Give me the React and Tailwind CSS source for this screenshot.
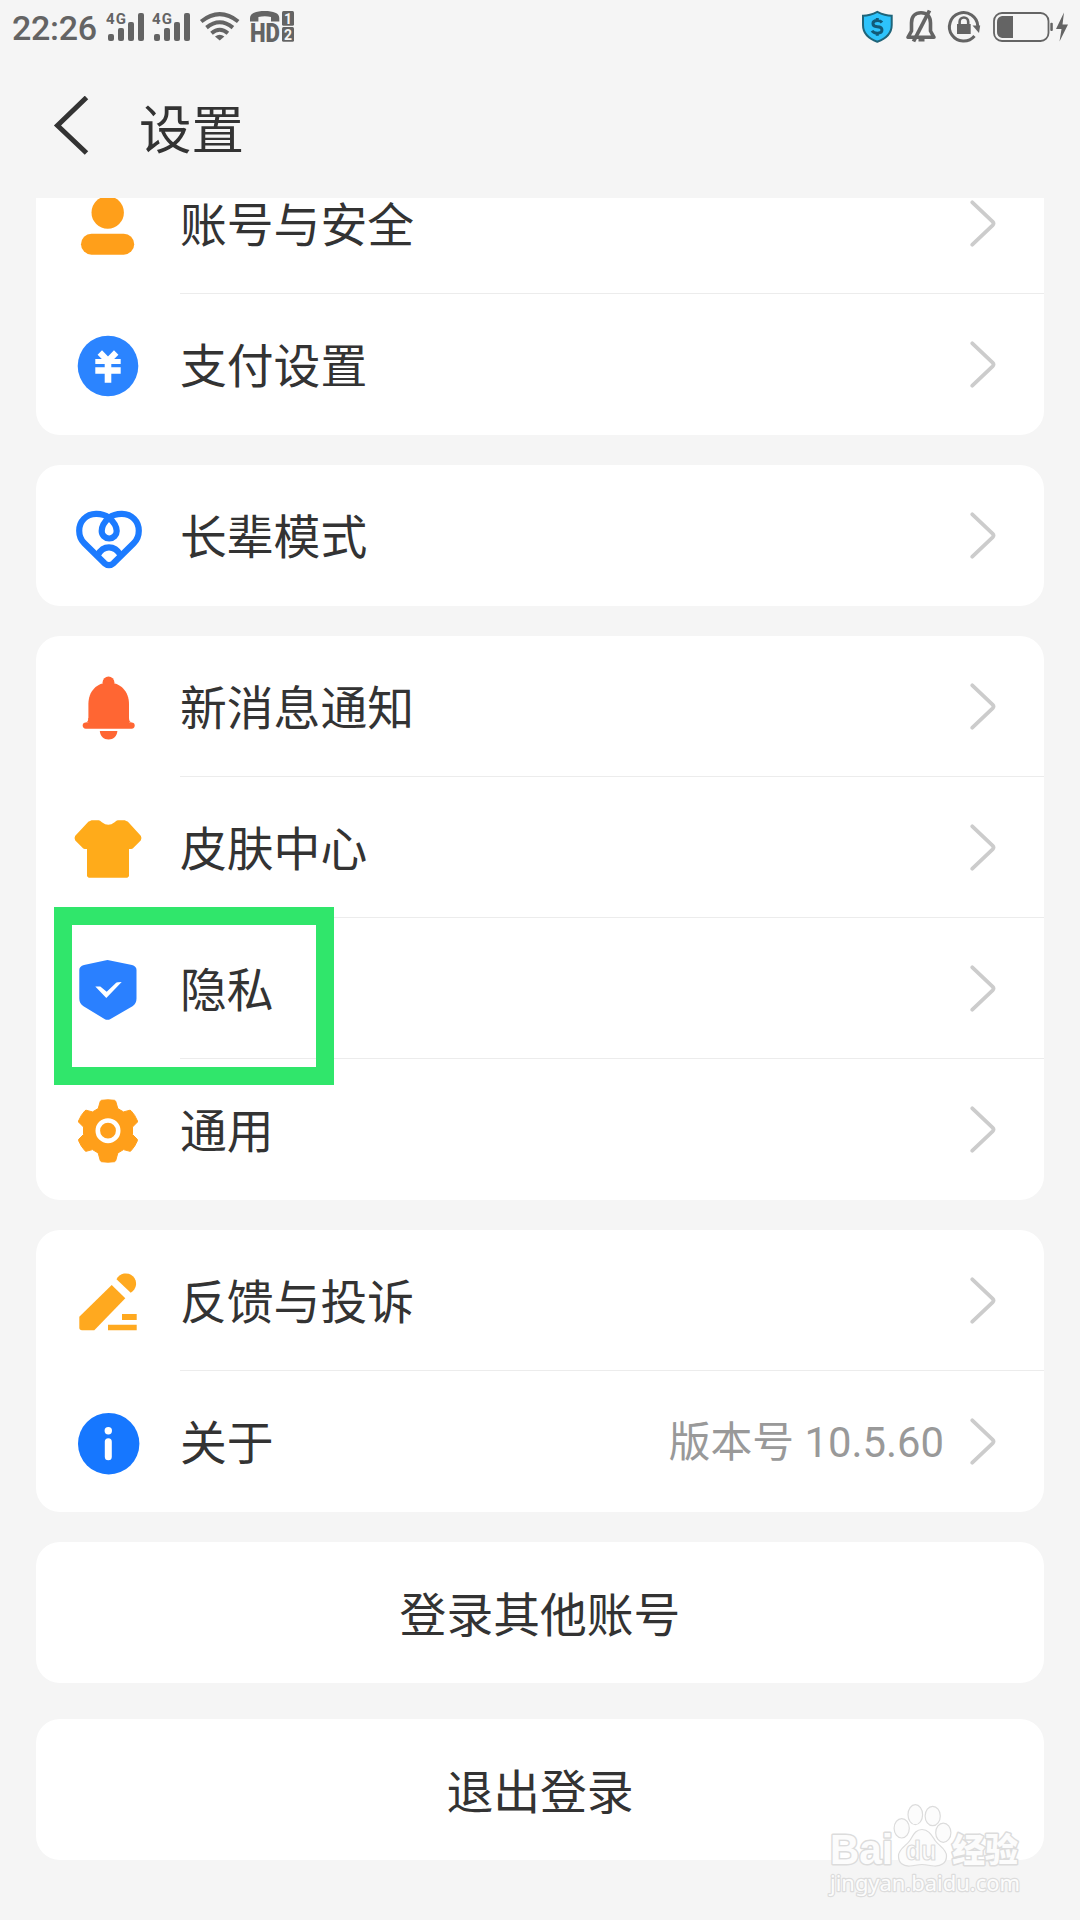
import clsx from 'clsx'

function UserIcon() {
  return (
    <g fill="#ff9f1a">
      <circle cx="35.7" cy="25.5" r="16.2" />
      <rect x="9" y="46.7" width="53.2" height="21" rx="10.5" />
    </g>
  )
}

function YenIcon() {
  return (
    <g>
      <circle cx="36" cy="38" r="30.3" fill="#2b84ff" />
      <path d="M27.8 24.5l8.2 8.4 8.2-8.4" fill="none" stroke="#fff" strokeWidth="6.2" />
      <path d="M23.3 31h25.4v5H23.3zM23.3 39.3h25.4v6.400H23.3zM32.700 31h6.6v23.700h-6.6z" fill="#fff" />
    </g>
  )
}

function HeartIcon() {
  return (
    <g fill="none" stroke="#1c7bff" strokeWidth="6.2" strokeLinecap="round" strokeLinejoin="round">
      <path d="M37 18.8C33 15.8 28.5 14.8 24 14.9C14 15.2 7.200 22.200 7.200 31.700C7.200 37 9 41 12.300 44.300L32.600 64.300Q37 68 41.400 64.300L61.700 44.300C65 41 66.800 37 66.800 31.700C66.800 22.200 60 15.200 50 14.900C45.500 14.800 41 15.800 37 18.8" />
      <path d="M37 18.800C32.500 22.600 29.700 26.700 29.700 32A7.500 7.500 0 0 0 44.700 32C44.700 26.700 41.500 22.600 37 18.800" />
      <path d="M25.800 56C28.500 50.800 32.300 48.300 37 48.300S45.500 50.800 48.600 56" />
    </g>
  )
}

function BellIcon() {
  return (
    <g fill="#ff6633">
      <circle cx="36.500" cy="12.300" r="5.900" />
      <path d="M16.400 53V34C16.400 21 25 12.400 36.600 12.400S57 21 57 34v19z" />
      <path d="M16.400 48q0 4-3 4.500h46.600q-3-.5-3-4.500z" />
      <rect x="10.700" y="52.500" width="52" height="6.200" rx="3.100" />
      <path d="M27.800 61h17.600c-.4 5-4 8.500-8.800 8.500s-8.400-3.500-8.800-8.500z" />
    </g>
  )
}

function ShirtIcon() {
  return (
    <path
      d="M19.500 10.300H26.500C29 10.800 31 14.800 36.300 14.800S43.500 10.800 46 10.300H52.800L55 11.300L68 25.500Q69 27.200 68 28.800L60.300 36.500L59 37H56V64.800L55.200 65.700H16.800L16 64.800V37H13L11.700 36.500L4 28.800Q3 27.200 4 25.500L17.300 11.300Z"
      fill="#ffab1a"
      stroke="#ffab1a"
      strokeWidth="2"
      strokeLinejoin="round"
    />
  )
}

function ShieldIcon() {
  return (
    <g>
      <path
        d="M33 8.500Q35.500 7.700 38 8.500L60 13Q64.500 14.300 64.500 18V46.500Q64.500 51.500 60.500 54.300L38.500 67Q35.500 68.700 32.500 67L11.500 54.300Q7.300 51.500 7.300 46.500V18Q7.300 14.300 12 13Z"
        fill="#2a80ff"
      />
      <path d="M23.300 34.600h5l6.400 5.200 9.200-8.800q1-.8 5.800-.9L34.300 46z" fill="#fff" />
    </g>
  )
}

function GearIcon() {
  return (
    <g>
      <path
        d="M29.500 7.300L36 6.800L42.500 7.300L43.700 8.200L45.800 15.600L51.500 18.900L58 17.200L59 17.700Q63 21.800 65.500 28L65.300 29.200L60.500 34V41.500L65.300 46.300L65.500 47.500Q63 53.600 59 57.800L58 58.300L51.500 56.600L45.800 60L43.700 67.700L42.500 68.700L36 69.200L29.500 68.700L28.300 67.700L26.200 60L20.500 56.600L14 58.300L13 57.800Q9 53.600 6.500 47.500L6.700 46.300L11.500 41.500V34L6.700 29.200L6.500 28Q9 21.800 13 17.700L14 17.200L20.500 18.900L26.200 15.600L28.300 8.200Z"
        fill="#ff9f1a"
        stroke="#ff9f1a"
        strokeLinejoin="round"
      />
      <circle cx="36" cy="37.700" r="10.200" fill="none" stroke="#fff" strokeWidth="4.600" />
    </g>
  )
}

function PencilIcon() {
  return (
    <g fill="#ffa91f">
      <path d="M39.700 21L53.300 34.300L22.300 66.300H10Q7.300 66.300 7.300 63.600V52.700Z" />
      <path d="M44.500 15.300A10.300 10.300 0 1 1 58.700 28.800Z" />
      <path d="M50 50h14.700v6H50zM36 60.700h28.700v5.600H36z" />
    </g>
  )
}

function InfoIcon() {
  return (
    <g>
      <circle cx="36.700" cy="38.700" r="30.700" fill="#1677ff" />
      <circle cx="36.300" cy="25.700" r="3.700" fill="#fff" />
      <rect x="32.800" y="33.300" width="7" height="22" rx="3.500" fill="#fff" />
    </g>
  )
}

const groups = [
  [
    { label: '账号与安全', icon: UserIcon },
    { label: '支付设置', icon: YenIcon },
  ],
  [{ label: '长辈模式', icon: HeartIcon }],
  [
    { label: '新消息通知', icon: BellIcon },
    { label: '皮肤中心', icon: ShirtIcon },
    { label: '隐私', icon: ShieldIcon, highlighted: true },
    { label: '通用', icon: GearIcon },
  ],
  [
    { label: '反馈与投诉', icon: PencilIcon },
    { label: '关于', icon: InfoIcon, extra: '版本号 10.5.60' },
  ],
]

function SignalBars({ x }) {
  return (
    <g transform={`translate(${x} 0)`}>
      <text x="0" y="23.500" fontSize="15" fontWeight="700" textLength="20">4G</text>
      <rect x="2" y="34" width="6" height="7" rx="2" />
      <rect x="12" y="28" width="6" height="13" rx="2" />
      <rect x="22" y="22" width="6" height="19" rx="2" />
      <rect x="32" y="13" width="6" height="28" rx="2" />
    </g>
  )
}

function StatusBar() {
  return (
    <div className="flex h-[54px] items-start justify-between pl-[12px] text-[#646464]">
      <div className="flex">
        <span className="w-[94px] pt-[9px] font-['Roboto'] text-[34px] leading-[38px] font-medium tracking-[-0.3px]">22:26</span>
        <svg width="194" height="54" viewBox="106 0 194 54" fill="currentColor" className="font-['Roboto']">
          <SignalBars x={106} />
          <SignalBars x={152} />
          <g fill="none" stroke="currentColor" strokeWidth="4">
            <path d="M201.200 21.500Q219.700 6.800 238.200 21.500" />
            <path d="M206.500 27.600Q219.700 16.800 232.900 27.600" />
            <path d="M211.500 33.200Q219.700 26.400 227.900 33.200" />
          </g>
          <path d="M215 36.500q4.700-3.400 9.400 0l-4.700 4z" />
          <path d="M250 21.500v-3.500C250 13 256 11 264.700 11S279.300 13 279.300 18v3.500h-8.300v-4.600q-6-1.400-12.600 0v4.600z" />
          <text x="250" y="41.700" fontSize="26" fontWeight="900" textLength="30" lengthAdjust="spacingAndGlyphs">HD</text>
          <rect x="282" y="11" width="12" height="14.700" rx="1.500" />
          <rect x="282" y="27" width="12" height="14.700" rx="1.500" />
          <g fill="#f5f5f5" fontSize="14" fontWeight="700">
            <text x="284" y="23.500">1</text>
            <text x="284" y="39.500">2</text>
          </g>
        </svg>
      </div>
      <svg width="220" height="54" viewBox="860 0 220 54" fill="none" stroke="currentColor">
        <path d="M877.300 11.800Q885 15.700 891.700 15.700V25Q891.700 36.500 877.300 41.800Q863 36.500 863 25V15.700Q869.800 15.700 877.300 11.800Z" fill="#2dc3fb" stroke="#1f6479" strokeWidth="2" />
        <path d="M882 22.500Q880.500 20.500 877.300 20.500C871.500 20.500 871.500 26.500 877.300 26.800C883.500 27 883.500 33.200 877.300 33.200Q873.500 33.200 872 30.800M877.300 18v3M877.300 32.500v3.300" stroke="#125a78" strokeWidth="3" />
        <path d="M908 37.300H934L930.500 31V23C930.500 16 926.500 12.800 921 12.800S911.500 16 911.500 23V31Z" strokeWidth="3.600" strokeLinejoin="round" />
        <path d="M913.500 41.500L929.500 10.500" strokeWidth="3.800" />
        <path d="M918.500 40h6" strokeWidth="3" />
        <path d="M977.800 26A14.200 14.200 0 1 0 974.500 36" strokeWidth="3" />
        <path d="M972.500 25.500h7.700l-1.200 7.500z" fill="currentColor" stroke="none" />
        <rect x="957" y="24" width="13.700" height="10" fill="currentColor" stroke="none" />
        <path d="M959.600 25v-3.200a4.300 4.300 0 0 1 8.600 0V25" strokeWidth="2.600" />
        <rect x="994" y="13" width="54.500" height="28" rx="8" strokeWidth="1.800" />
        <path d="M1002 16h11v22h-11q-5-1-5-6v-10q0-5 5-6z" fill="currentColor" stroke="none" />
        <rect x="1050.300" y="22.700" width="2.500" height="8.400" rx="1" fill="currentColor" stroke="none" />
        <path d="M1064 12.500L1056 29H1061.500L1059.500 41.500L1068 24.500H1062.500Z" fill="currentColor" stroke="none" />
      </svg>
    </div>
  )
}

function Chevron() {
  return (
    <svg width="26" height="49" viewBox="0 0 26 49" fill="none" stroke="#ccc" strokeWidth="3.800" strokeLinecap="round" strokeLinejoin="round" className="mt-px">
      <path d="M2.300 3.300L22.600 22.600Q24.400 24.500 22.600 26.400L2.300 45.700" />
    </svg>
  )
}

function SettingRow({ item, last }) {
  const Icon = item.icon
  return (
    <li className="relative flex h-[141px] pl-[36px]">
      <svg width="72" height="73" viewBox="0 0 72 73" className="mt-[34px] shrink-0">
        <Icon />
      </svg>
      <div className={clsx('ml-[36px] flex flex-1 items-center border-b pr-[48px]', last ? 'border-transparent' : 'border-[#ececec]')}>
        <span className="flex-1 pb-[2px] text-[46.8px]">{item.label}</span>
        {item.extra && <span className="mr-[26px] pt-[5px] font-['Roboto','Noto_Sans_CJK_SC',sans-serif] text-[41.8px] text-[#999]">{item.extra}</span>}
        <Chevron />
      </div>
      {item.highlighted && (
        <div className="absolute top-[-11px] left-[18px] z-10 h-[178px] w-[280px] border-[18px] border-[#30e66b]" />
      )}
    </li>
  )
}

function Watermark() {
  return (
    <svg width="280" height="140" viewBox="0 0 280 140" className="absolute right-0 bottom-0" fill="#fcfcfc" stroke="#dcdcdc" strokeWidth="3" strokeLinejoin="round">
      <g className="[paint-order:stroke]">
        <text x="30" y="83.500" fontSize="42" fontWeight="700" textLength="63" lengthAdjust="spacingAndGlyphs" className="font-['Liberation_Sans']">Bai</text>
        <text x="152" y="82" fontSize="33" fontWeight="900" textLength="66" className="font-['Noto_Sans_CJK_SC']">经验</text>
        <text x="30" y="110.500" fontSize="22" strokeWidth="2.400" textLength="190" lengthAdjust="spacingAndGlyphs" className="font-['Noto_Sans']">jingyan.baidu.com</text>
      </g>
      <g strokeWidth="1.200">
        <ellipse cx="101.700" cy="48.300" rx="7.600" ry="9.700" />
        <ellipse cx="115.300" cy="34.700" rx="7.300" ry="10" />
        <ellipse cx="132.700" cy="36" rx="7.600" ry="9.700" />
        <ellipse cx="143.300" cy="52.700" rx="7.600" ry="9.600" />
        <path d="M122 49.500C129 49.500 132 56 135.500 61C139 66 146.500 69 146.500 76C146.500 83 141 86.500 134 86C129 85.500 126 84.500 122 84.500S115 85.500 110 86C103 86.500 98.500 83 98.500 76C98.500 69 106 66 109.500 61C113 56 115 49.500 122 49.500Z" />
        <text x="105.500" y="80" fontSize="27" fontWeight="700" textLength="31" lengthAdjust="spacingAndGlyphs" className="font-['Liberation_Sans']">du</text>
      </g>
    </svg>
  )
}

export default function App() {
  return (
    <div className="relative flex h-[1920px] w-[1080px] flex-col overflow-hidden bg-[#f5f5f5] font-['Noto_Sans_CJK_SC',sans-serif] text-[#333]">
      <StatusBar />
      <header className="flex h-[144px] items-center">
        <svg width="40" height="60" viewBox="0 0 40 60" fill="none" stroke="#333" strokeWidth="5" className="ml-[52px]">
          <path d="M34.500 1.500L5.500 29.500L34.500 57" />
        </svg>
        <h1 className="ml-[47px] text-[52.500px] leading-none">设置</h1>
      </header>

      {/* scrolled content, the first card slides under the header */}
      <main className="flex-1 overflow-hidden px-[36px]">
        <div className="-mt-[45px] flex flex-col gap-[30px]">
          {groups.map((items) => (
            <ul key={items[0].label} className="rounded-[24px] bg-white">
              {items.map((item, i) => (
                <SettingRow key={item.label} item={item} last={i === items.length - 1} />
              ))}
            </ul>
          ))}
          <button className="h-[141px] rounded-[24px] bg-white text-[46.800px]">登录其他账号</button>
          <button className="mt-[6px] h-[141px] rounded-[24px] bg-white text-[46.800px]">退出登录</button>
        </div>
      </main>
      <Watermark />
    </div>
  )
}
